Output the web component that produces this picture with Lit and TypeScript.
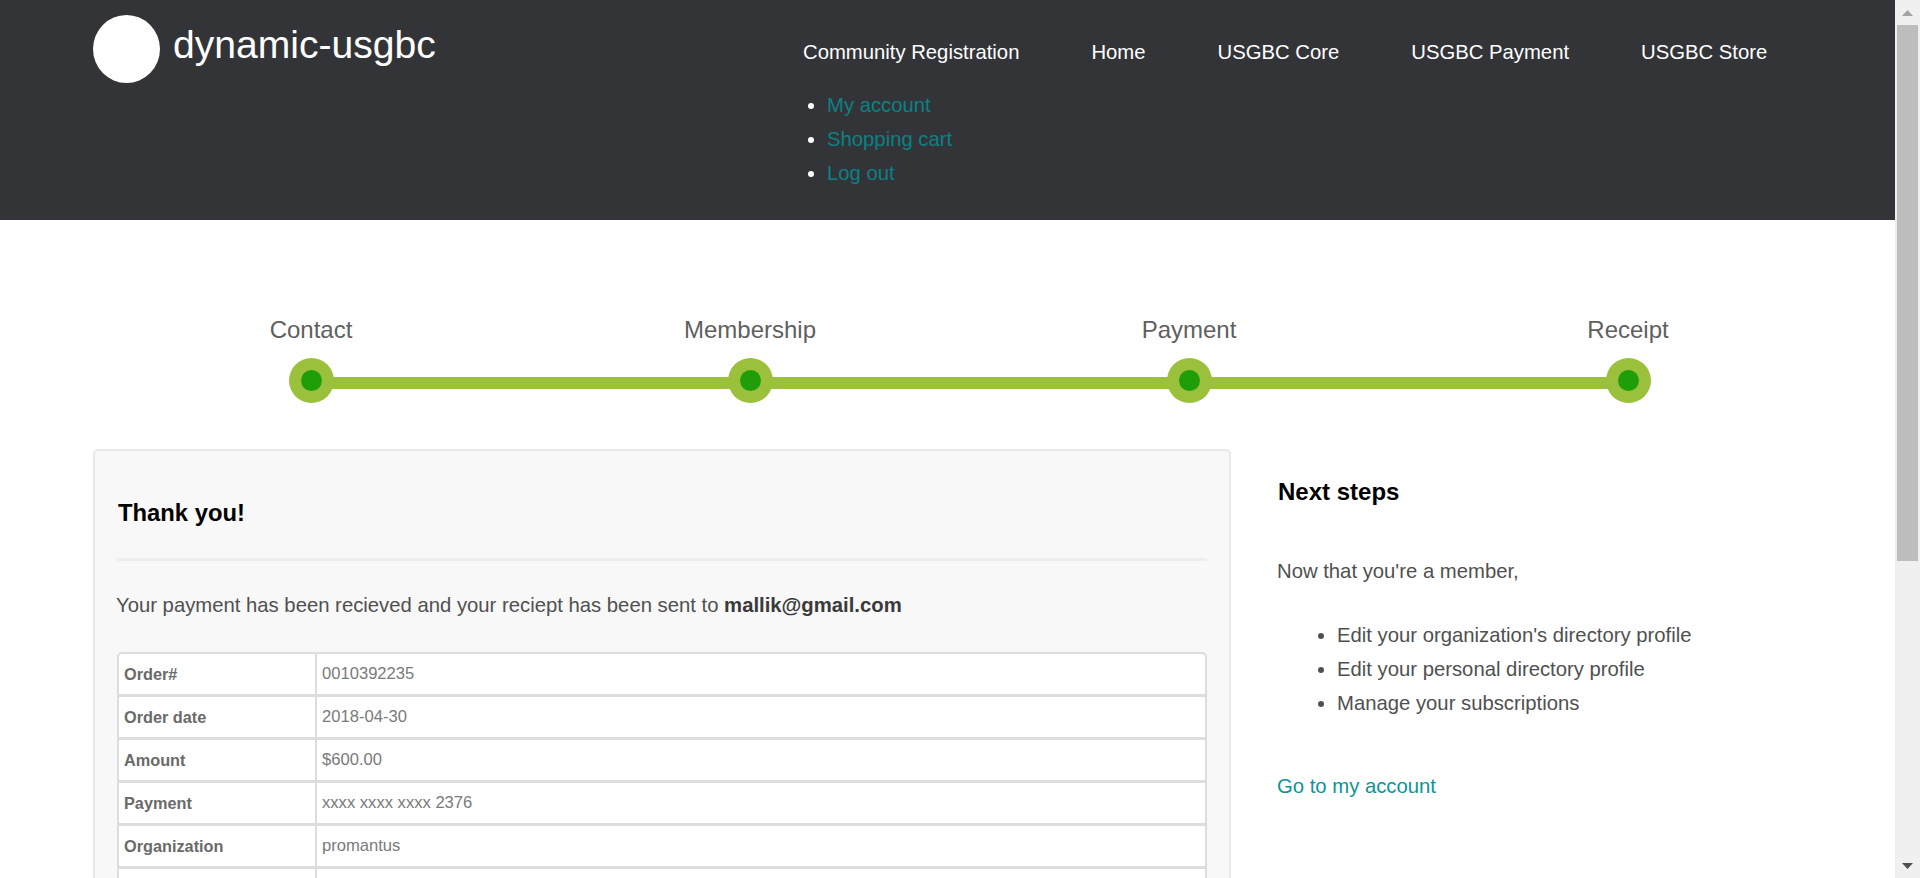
import { LitElement, html, css } from 'lit';
import { customElement } from 'lit/decorators.js';

const NAV = ['Community Registration', 'Home', 'USGBC Core', 'USGBC Payment', 'USGBC Store'];
const USER_LINKS = ['My account', 'Shopping cart', 'Log out'];
const STEPS = ['Contact', 'Membership', 'Payment', 'Receipt'];
const ORDER = [
  ['Order#', '0010392235'],
  ['Order date', '2018-04-30'],
  ['Amount', '$600.00'],
  ['Payment', 'xxxx xxxx xxxx 2376'],
  ['Organization', 'promantus'],
  ['', ''],
];
const NEXT = [
  "Edit your organization's directory profile",
  'Edit your personal directory profile',
  'Manage your subscriptions',
];

@customElement('app-root')
export class AppRoot extends LitElement {
  static styles = css`
    :host {
      display: flex;
      height: 878px;
      overflow: hidden;
      background: #fff;
      font-family: 'Liberation Sans', Arial, sans-serif;
      color: #505050;
    }

    .page {
      flex: 1;
      min-width: 0;
      overflow: hidden;
    }

    /* header */
    .header {
      height: 220px;
      box-sizing: border-box;
      background: #333438;
      padding: 15px 0 0 93px;
      display: flex;
    }

    .brand {
      display: flex;
      width: 710px;
      flex: none;
    }

    .logo {
      width: 67px;
      height: 68px;
      border-radius: 50%;
      background: #fff;
    }

    .site-name {
      margin: 5px 0 0 13px;
      font-size: 39.1px;
      line-height: 50px;
      color: #fff;
    }

    .nav {
      display: flex;
      gap: 72px;
      margin-top: 23px;
      font-size: 20.3px;
      line-height: 28px;
      color: #fff;
    }

    .user-links {
      margin: 22px 0 0;
      padding: 0 0 0 24px;
      color: #fff;
      font-size: 20.3px;
      line-height: 34px;
    }

    .user-links a {
      color: #0a8285;
      text-decoration: none;
    }

    /* stepper: the bar runs between the first and last dot centres */
    .stepper {
      display: flex;
      justify-content: space-between;
      padding: 95px 0 0;
      width: 1455px;
      height: 229px;
      margin-left: 242px;
      box-sizing: border-box;
      background: linear-gradient(#9bc03c, #9bc03c) 69px 157px / 1317px 12px no-repeat;
    }

    .step {
      width: 138px;
      display: flex;
      flex-direction: column;
      align-items: center;
      gap: 13px;
      font-size: 24px;
      line-height: 30px;
      color: #5f5f5f;
    }

    .dot {
      width: 45px;
      height: 45px;
      border-radius: 50%;
      background: #9bc03c;
      display: flex;
      align-items: center;
      justify-content: center;
    }

    .dot::after {
      content: '';
      width: 21px;
      height: 21px;
      border-radius: 50%;
      background: #1f9e0a;
    }

    /* body */
    .content {
      display: flex;
      padding-left: 93px;
    }

    .card {
      width: 1138px;
      flex: none;
      box-sizing: border-box;
      border: 2px solid #e8e8e8;
      border-radius: 5px;
      background: #f8f8f8;
      padding: 0 22px 40px;
    }

    .card h2 {
      margin: 0;
      padding: 42px 0 25px 1px;
      font-size: 23.8px;
      line-height: 40px;
      color: #000;
      border-bottom: 3px solid #eee;
    }

    .intro {
      margin: 29px 0 32px -1px;
      font-size: 20.3px;
      line-height: 30px;
    }

    .intro strong {
      color: #3a3a3a;
    }

    .order {
      border: 2px solid #ddd;
      border-bottom: 0;
      border-radius: 5px 5px 0 0;
      background: #fff;
      font-size: 16.6px;
      color: #7a7a7a;
    }

    .row {
      display: grid;
      grid-template-columns: 198px 1fr;
      height: 43px;
      box-sizing: border-box;
      border-bottom: 3px solid #ddd;
      line-height: 40px;
    }

    .row b {
      padding-left: 5px;
      border-right: 2px solid #ddd;
      font-size: 16.3px;
      color: #6a6a6a;
    }

    .row span {
      padding-left: 5px;
    }

    .side {
      margin-left: 46px;
      flex: 1;
    }

    .side h3 {
      margin: 27px 0 0;
      padding-left: 1px;
      font-size: 24px;
      line-height: 32px;
      color: #000;
    }

    .side p {
      margin: 48px 0 0;
      font-size: 20.3px;
      line-height: 30px;
    }

    .side ul {
      margin: 32px 0 0;
      padding: 0 0 0 60px;
      font-size: 20.3px;
      line-height: 34px;
    }

    .side a {
      display: block;
      margin-top: 51px;
      font-size: 20.3px;
      line-height: 30px;
      color: #0b9595;
      text-decoration: none;
    }

    /* scrollbar */
    .scrollbar {
      width: 25px;
      flex: none;
      box-sizing: border-box;
      padding: 0 2px;
      display: flex;
      flex-direction: column;
      background: #f0f0f0;
    }

    .arrow {
      height: 25px;
      flex: none;
      display: flex;
      align-items: center;
      justify-content: center;
    }

    .thumb {
      height: 536px;
      background: #bdbdbd;
    }

    .spacer {
      flex: 1;
    }
  `;

  render() {
    return html`
      <div class="page">
        <header class="header">
          <div class="brand">
            <div class="logo"></div>
            <div class="site-name">dynamic-usgbc</div>
          </div>
          <div>
            <nav class="nav">${NAV.map((item) => html`<span>${item}</span>`)}</nav>
            <ul class="user-links">
              ${USER_LINKS.map((item) => html`<li><a href="#">${item}</a></li>`)}
            </ul>
          </div>
        </header>

        <div class="stepper">
          ${STEPS.map((step) => html`<div class="step">${step}<div class="dot"></div></div>`)}
        </div>

        <div class="content">
          <section class="card">
            <h2>Thank you!</h2>
            <p class="intro">
              Your payment has been recieved and your reciept has been sent to
              <strong>mallik@gmail.com</strong>
            </p>
            <div class="order">
              ${ORDER.map(
                ([label, value]) => html`<div class="row"><b>${label}</b><span>${value}</span></div>`
              )}
            </div>
          </section>
          <aside class="side">
            <h3>Next steps</h3>
            <p>Now that you're a member,</p>
            <ul>
              ${NEXT.map((item) => html`<li>${item}</li>`)}
            </ul>
            <a href="#">Go to my account</a>
          </aside>
        </div>
      </div>

      <div class="scrollbar">
        <div class="arrow">
          <svg width="11" height="6" viewBox="0 0 11 6"><path d="M5.5 0 L11 6 H0 Z" fill="#a3a3a3" /></svg>
        </div>
        <div class="thumb"></div>
        <div class="spacer"></div>
        <div class="arrow">
          <svg width="11" height="6" viewBox="0 0 11 6"><path d="M0 0 H11 L5.5 6 Z" fill="#505050" /></svg>
        </div>
      </div>
    `;
  }
}
